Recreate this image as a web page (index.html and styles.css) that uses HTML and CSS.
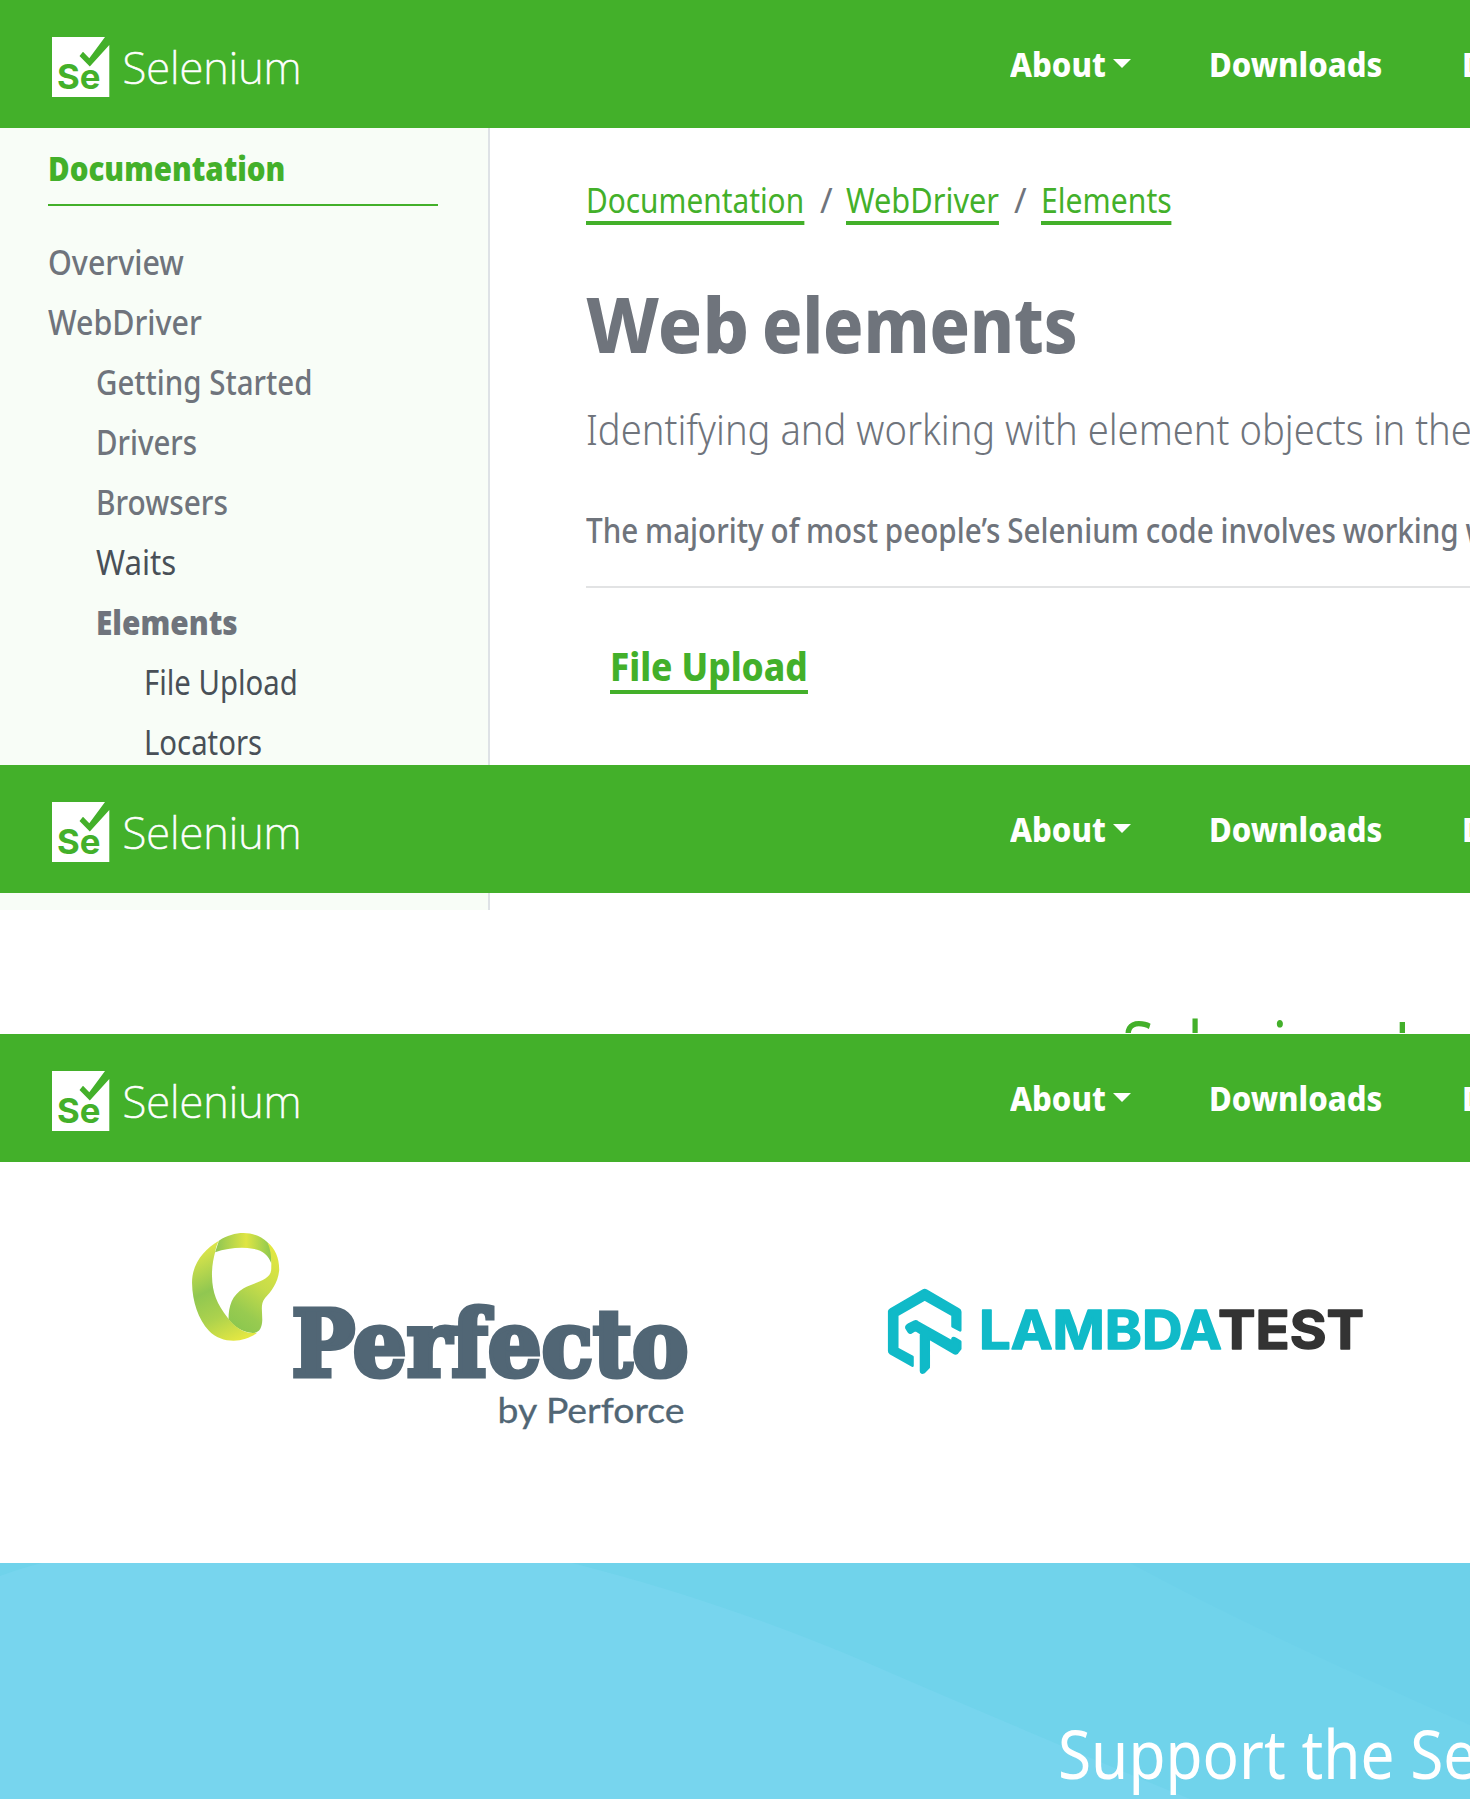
FILE: index.html
```
<!DOCTYPE html>
<html lang="en">
<head>
<meta charset="utf-8">
<title>Web elements | Selenium</title>
<link rel="stylesheet" href="styles.css">
</head>
<body>
<svg class="defs" width="0" height="0">
  <symbol id="brand" viewBox="0 0 250 62">
    <path fill="#fff" d="M0 0H53L37.3 21.3L31 14.7L27.5 19L37.8 29.5L57.3 8V60H0Z"/>
    <text class="brand-se" x="5" y="52.4" textLength="43.5" lengthAdjust="spacingAndGlyphs">Se</text>
    <text class="brand-word" x="70.5" y="46.5" textLength="179" lengthAdjust="spacingAndGlyphs">Selenium</text>
  </symbol>
</svg>

<header class="navbar">
  <svg class="brand" width="250" height="62"><use href="#brand"/></svg>
  <nav class="menu">
    <a class="about"><span>About</span><i class="caret"></i></a>
    <a class="downloads"><span>Downloads</span></a>
    <a class="docs"><span>Documentation</span></a>
  </nav>
</header>

<section class="page">
  <aside class="sidebar">
    <h2><span>Documentation</span></h2>
    <ul>
      <li class="overview"><span>Overview</span></li>
      <li class="webdriver"><span>WebDriver</span></li>
      <li class="sub started"><span>Getting Started</span></li>
      <li class="sub drivers"><span>Drivers</span></li>
      <li class="sub browsers"><span>Browsers</span></li>
      <li class="sub leaf waits"><span>Waits</span></li>
      <li class="sub active"><span>Elements</span></li>
      <li class="subsub leaf upload"><span>File Upload</span></li>
      <li class="subsub leaf locators"><span>Locators</span></li>
    </ul>
  </aside>
  <main class="content">
    <nav class="crumbs">
      <a class="c1">Documentation</a><b>/</b><a class="c2">WebDriver</a><b>/</b><a class="c3">Elements</a>
    </nav>
    <h1><span class="w1">Web</span> <span class="w2">elements</span></h1>
    <p class="lead">Identifying and working with element objects in the DOM.</p>
    <p class="intro">The majority of most people’s Selenium code involves working with web elements.</p>
    <hr>
    <a class="entry">File Upload</a>
  </main>
</section>

<header class="navbar">
  <svg class="brand" width="250" height="62"><use href="#brand"/></svg>
  <nav class="menu">
    <a class="about"><span>About</span><i class="caret"></i></a>
    <a class="downloads"><span>Downloads</span></a>
    <a class="docs"><span>Documentation</span></a>
  </nav>
</header>

<section class="sponsors-top">
  <div class="sidebar-end"></div>
  <div class="sponsors-title"><h2>Selenium Level Sponsors</h2></div>
</section>

<header class="navbar">
  <svg class="brand" width="250" height="62"><use href="#brand"/></svg>
  <nav class="menu">
    <a class="about"><span>About</span><i class="caret"></i></a>
    <a class="downloads"><span>Downloads</span></a>
    <a class="docs"><span>Documentation</span></a>
  </nav>
</header>

<section class="sponsors">
  <svg class="perfecto" width="540" height="240">
    <defs>
      <linearGradient id="g1" x1="0" y1="0" x2="1" y2="0"><stop offset="0" stop-color="#8cc553"/><stop offset=".55" stop-color="#dfe544"/><stop offset="1" stop-color="#8cc850"/></linearGradient>
      <linearGradient id="g2" x1=".4" y1="0" x2=".7" y2="1"><stop offset="0" stop-color="#dfe64a"/><stop offset=".42" stop-color="#90c751"/><stop offset=".7" stop-color="#acd24d"/><stop offset="1" stop-color="#e4e742"/></linearGradient>
      <linearGradient id="g3" x1=".7" y1="0" x2=".3" y2="1"><stop offset="0" stop-color="#e2e740"/><stop offset=".45" stop-color="#c6dc4a"/><stop offset=".8" stop-color="#98cb50"/><stop offset="1" stop-color="#8cc74f"/></linearGradient>
    </defs>
    <g transform="scale(.34435 .33333)">
      <path fill="url(#g1)" d="M142 92C190 60 248 62 283 97C294 112 297 136 294 160C287 136 268 120 240 116C206 110 164 115 131 127Z"/>
      <path fill="url(#g3)" d="M283 97C306 117 318 146 317 182C313 220 293 245 276 264C262 281 268 303 268 330C267 354 260 368 240 369C210 367 184 349 170 328C170 288 180 256 214 235C246 216 294 212 294 176C295 145 293 120 283 97Z"/>
      <path fill="url(#g2)" d="M142 92C100 117 64 159 64 218C65 276 82 327 113 362C150 402 215 400 253 368C214 374 187 349 168 324C136 282 123 248 122 199C121 174 126 145 131 127C133 114 136 103 142 92Z"/>
    </g>
    <text class="perfecto-word" x="121.5" y="165.5" textLength="397" lengthAdjust="spacingAndGlyphs">Perfecto</text>
    <text class="perfecto-by" x="327.5" y="212.5" textLength="187" lengthAdjust="spacingAndGlyphs">by Perforce</text>
  </svg>
  <svg class="lambda" width="520" height="140">
    <g transform="scale(.33163 .33333)" fill="#10bac8" stroke="#10bac8" stroke-width="8" stroke-linejoin="round">
      <path d="M58 154Q58 151 63 148L160 92Q165 89 170 92L267 148Q272 151 272 155V211L249 199V165L165 118L82 165V266L128 291V317L61 279Q58 277 58 273Z"/>
      <path d="M110 204Q108 198 117 193L134 185Q139 183 144 187L249 246V236Q251 232 257 236L272 245V266L262 279Q258 282 252 278L177 234V322L163 336Q154 341 154 333V220L141 212Q137 210 133 212L123 218Q120 219 117 215Z"/>
    </g>
    <text class="lambda-a" x="109" y="88.5" textLength="243" lengthAdjust="spacingAndGlyphs">LAMBDA</text>
    <text class="lambda-b" x="348" y="88.5" textLength="146" lengthAdjust="spacingAndGlyphs">TEST</text>
  </svg>
</section>

<section class="support">
  <svg class="waves" width="1470" height="236">
    <path fill="#6dd1ea" d="M1130 0Q1255 68 1470 162V0Z"/>
    <path fill="#77d5ee" d="M0 13Q22 5 42 0H572C670 25 770 58 870 101S1070 187 1190 236H0Z"/>
  </svg>
  <h2>Support the Selenium Project</h2>
</section>
</body>
</html>
```

FILE: styles.css
```
* { box-sizing: border-box; }
html { overflow-x: hidden; }
body {
  margin: 0;
  width: 1470px;
  overflow-x: hidden;
  font: 400 34px "Noto Sans", sans-serif;
  color: #6f747c;
  background: #fff;
}
h1, h2, p, ul { margin: 0; padding: 0; font-weight: inherit; font-size: inherit; }
ul { list-style: none; }
.defs { display: block; height: 0; }

/* navigation bar */
.navbar {
  height: 128px;
  padding: 0 0 0 52px;
  display: flex;
  justify-content: space-between;
  background: #43b02a;
  overflow: hidden;
}
.brand { margin-top: 37px; }
.brand-se { font: 700 34px Inter, sans-serif; fill: #43b02a; }
.brand-word { font: 200 45px "Noto Sans", sans-serif; fill: #fff; stroke: #fff; stroke-width: .6px; }
.menu {
  display: grid;
  grid-template-columns: 199px 253px 8px;
  color: #fff;
  font-weight: 800;
  line-height: 128px;
  overflow: hidden;
}
.menu a { display: flex; overflow: hidden; }
.menu span, .sidebar span { display: block; width: max-content; white-space: nowrap; transform-origin: 0 50%; }
.menu .about span { transform: scaleX(.915); width: 103px; }
.downloads span, .docs span { transform: scaleX(.914); }
.caret { margin-top: 59px; border: 9px solid transparent; border-top-color: #fff; border-bottom: 0; height: 0; }

/* documentation page */
.page { display: flex; height: 637px; overflow: hidden; }
.sidebar {
  flex: none;
  width: 490px;
  padding: 10px 50px 0 48px;
  background: #f8fdf7;
  border-right: 2px solid #dee2e6;
  line-height: 60px;
}
.sidebar h2 {
  height: 68px;
  margin-bottom: 26px;
  border-bottom: 2px solid #43b02a;
  color: #43b02a;
  font-weight: 900;
}
.sidebar h2 span { transform: scaleX(.868); }
.sidebar li { height: 60px; font-weight: 480; }
.sidebar .sub { padding-left: 48px; }
.sidebar .subsub { padding-left: 96px; }
.sidebar .leaf { font-weight: 390; color: #495057; }
.sidebar .active { font-weight: 900; }
.overview span { transform: scaleX(.895); }
.webdriver span { transform: scaleX(.894); }
.started span { transform: scaleX(.866); }
.drivers span { transform: scaleX(.866); }
.browsers span { transform: scaleX(.877); }
.waits span { transform: scaleX(.918); }
.active span { transform: scaleX(.877); }
.upload span, .locators span { transform: scaleX(.862); }

.content { flex: 1; min-width: 0; padding: 50px 0 0 96px; overflow: hidden; }
.content > *, .crumbs a { white-space: nowrap; transform-origin: 0 50%; }
.crumbs { display: grid; grid-template-columns: 234px 26px 168px 27px 131px; line-height: 45px; height: 47px; }
.crumbs a { width: max-content; height: 47px; color: #43b02a; border-bottom: 4px solid #43b02a; }
.crumbs b { font-weight: 400; }
.c1 { transform: scaleX(.877); }
.c2 { transform: scaleX(.905); }
.c3 { transform: scaleX(.887); }
h1 { display: grid; grid-template-columns: 176px max-content; margin-top: 53px; font-size: 76px; line-height: 92px; font-weight: 800; }
h1 span { transform-origin: 0 50%; }
.w1 { transform: scaleX(.965); }
.w2 { transform: scaleX(.878); }
.lead { margin-top: 27px; font-size: 42px; line-height: 64px; font-weight: 340; width: max-content; transform: scaleX(.908); }
.intro { margin-top: 44px; line-height: 50px; font-weight: 480; width: max-content; word-spacing: -1px; transform: scaleX(.8715); }
hr { margin: 31px 0 0; border: 0; height: 2px; background: #e2e3e4; }
.entry {
  display: block;
  width: max-content;
  margin: 53px 0 0 24px;
  height: 53px;
  line-height: 49px;
  font-size: 39px;
  font-weight: 800;
  color: #43b02a;
  border-bottom: 4px solid #43b02a;
  transform: scaleX(.904);
}

/* sponsors */
.sponsors-top { display: flex; height: 141px; padding-bottom: 1px; }
.sidebar-end { flex: none; width: 490px; height: 17px; background: #f8fdf7; border-right: 2px solid #dee2e6; }
.sponsors-title { flex: 1; min-width: 0; height: 140px; padding: 105px 0 0 632px; overflow: hidden; }
.sponsors-title h2 {
  width: max-content;
  font-size: 68px;
  line-height: 92px;
  color: #43b02a;
  font-weight: 450;
  transform: scaleX(.865);
  transform-origin: 0 50%;
}
.sponsors { display: flex; height: 401px; padding: 48px 0 0 170px; gap: 160px; }
.lambda { margin-top: 50px; }
.perfecto-word { font: 700 92px "DejaVu Serif", serif; fill: #516675; stroke: #516675; stroke-width: 5px; }
.perfecto-by { font: 400 35px Lato, sans-serif; fill: #516675; stroke: #516675; stroke-width: .3px; }
.lambda-a, .lambda-b { font: 750 53px Inter, sans-serif; fill: #10bac8; stroke: #10bac8; stroke-width: 1.5px; stroke-linejoin: round; }
.lambda-b { fill: #333; stroke: #333; }

/* support banner */
.support { display: grid; grid-template-columns: 1470px; height: 236px; background: #70d3eb; overflow: hidden; }
.support > * { grid-area: 1 / 1; }
.support h2 {
  width: 1470px;
  padding: 144px 0 0 1058px;
  line-height: 92px;
  font-size: 68px;
  color: #fff;
  white-space: nowrap;
  transform: scaleX(.887);
  transform-origin: 1058px 50%;
}
```
